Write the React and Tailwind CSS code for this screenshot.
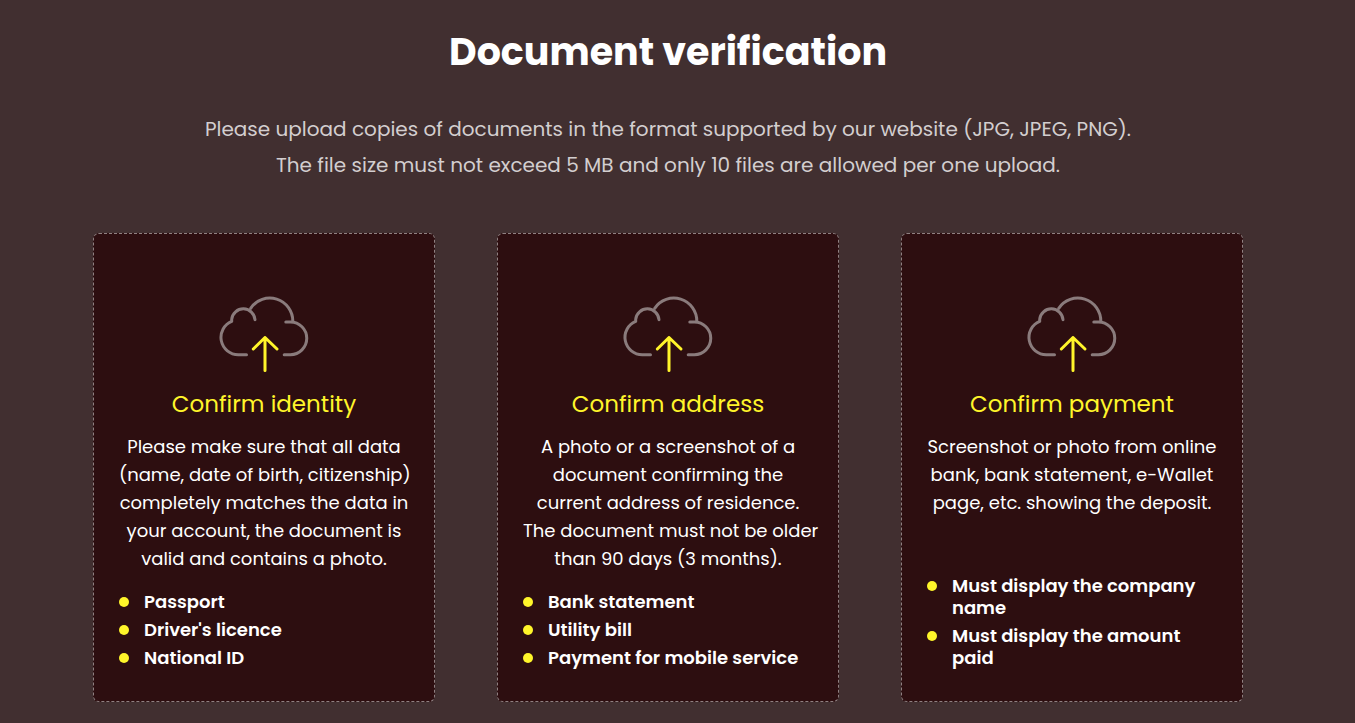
import React from 'react';

const cards = [
  {
    id: 'identity',
    title: 'Confirm identity',
    lines: [
      'Please make sure that all data',
      '(name, date of birth, citizenship)',
      'completely matches the data in',
      'your account, the document is',
      'valid and contains a photo.',
    ],
    items: ['Passport', "Driver's licence", 'National ID'],
  },
  {
    id: 'address',
    title: 'Confirm address',
    lines: [
      'A photo or a screenshot of a',
      'document confirming the',
      'current address of residence.',
      'The document must not be older',
      'than 90 days (3 months).',
    ],
    items: ['Bank statement', 'Utility bill', 'Payment for mobile service'],
  },
  {
    id: 'payment',
    title: 'Confirm payment',
    lines: [
      'Screenshot or photo from online',
      'bank, bank statement, e-Wallet',
      'page, etc. showing the deposit.',
    ],
    items: ['Must display the company name', 'Must display the amount paid'],
  },
];

function UploadIcon() {
  return (
    <svg
      width="88"
      height="76"
      viewBox="0 0 88 76"
      fill="none"
      strokeWidth="3"
      strokeLinecap="round"
      strokeLinejoin="round"
      className="mx-auto overflow-visible"
      aria-hidden="true"
    >
      <g stroke="#8a7b7c">
        <path d="M26.5 58.7H18.4A17.3 17.3 0 0 1 11.7 25.4V23.3A11.7 11.7 0 0 1 35 23.7" />
        <path d="M30.7 12.3A23 23 0 0 1 72.8 25.5" />
        <path d="M65.8 26H70.4A16.3 16.3 0 0 1 70.4 58.7H64.2" />
      </g>
      <path d="M45 74.5V41.5M33.3 53L45 41.5L57 53" stroke="#fff52a" />
    </svg>
  );
}

function DocumentCard({ title, lines, items }) {
  return (
    <div className="flex flex-col rounded-md border border-dashed border-[#8f8081] bg-[#2d0e10] px-[25px] pt-[62px] pb-8">
      <UploadIcon />
      <h2 className="mt-4 text-center text-[23px] leading-8 text-[#fff52a]">{title}</h2>
      <p className="mt-[13px] mb-[18px] text-center text-lg leading-7 whitespace-nowrap text-white">
        {lines.map((line) => (
          <span key={line} className="block">{line}</span>
        ))}
      </p>
      <ul className="mt-auto space-y-1.5">
        {items.map((item) => (
          <li key={item} className="flex items-start gap-[15px] text-lg leading-[22px] font-semibold text-white">
            <span className="mt-1.5 size-2.5 shrink-0 rounded-full bg-[#fff52a]" />
            {item}
          </li>
        ))}
      </ul>
    </div>
  );
}

export default function App() {
  return (
    <main className="min-h-screen bg-[#412f30] pt-6 pr-[19px] pb-5 font-[Poppins,Inter,sans-serif]">
      <div className="mx-auto max-w-[1150px]">
        <h1 className="text-center text-[38px] leading-14 font-bold text-white">Document verification</h1>
        <p className="mt-[31px] text-center text-xl leading-9 text-[#d3cecf]">
          Please upload copies of documents in the format supported by our website (JPG, JPEG, PNG).
          <br />
          The file size must not exceed 5 MB and only 10 files are allowed per one upload.
        </p>
        <div className="mt-[50px] grid grid-cols-3 gap-[62px]">
          {cards.map((card) => (
            <DocumentCard key={card.id} {...card} />
          ))}
        </div>
      </div>
    </main>
  );
}
